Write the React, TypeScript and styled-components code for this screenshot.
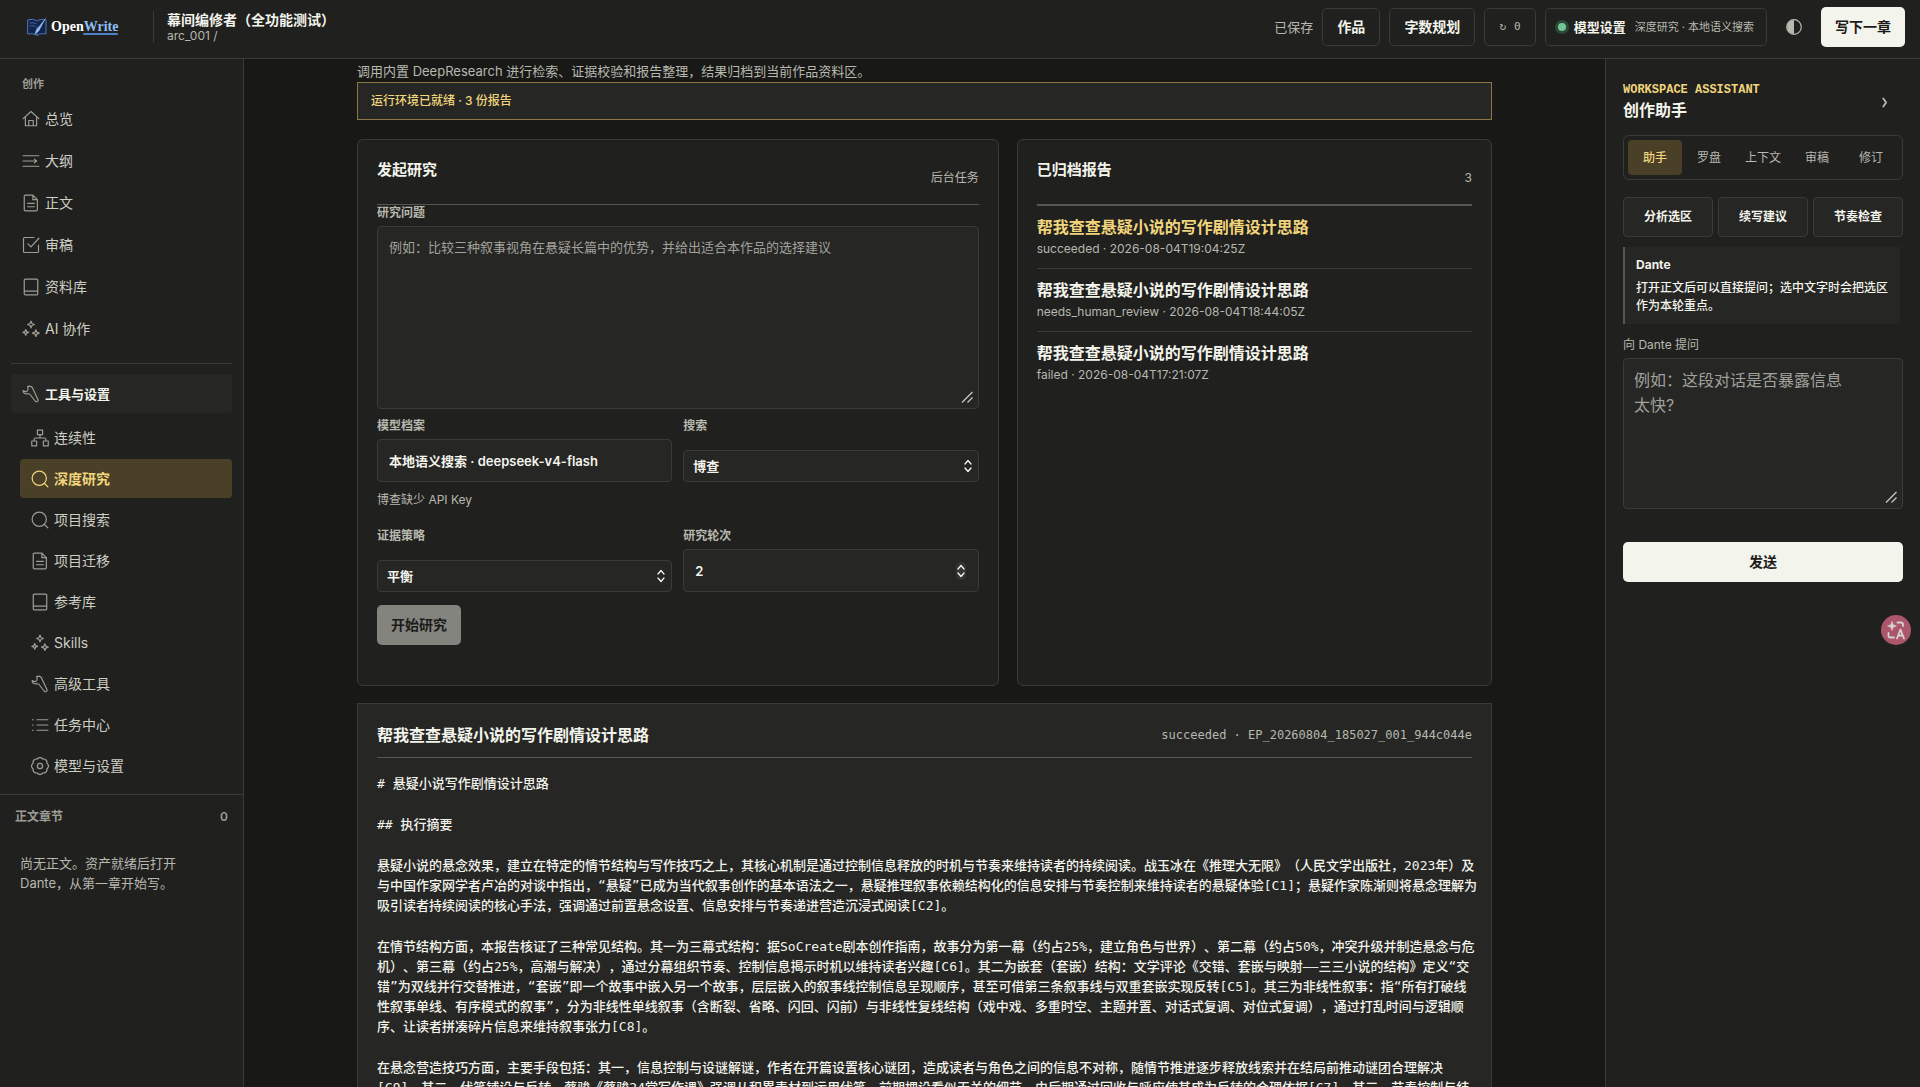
import React from "react";
import styled, { createGlobalStyle, css } from "styled-components";

const c = {
  bg: "#181816",
  panel: "#20201e",
  field: "#262624",
  line: "#3a3a37",
  rule: "#56564f",
  text: "#f3f4ec",
  muted: "#b7b8ae",
  dim: "#9c9d94",
  gold: "#f0d57c",
  goldLine: "#8b7644",
  goldBg: "#4a4028",
  ink: "#1b1b19",
};
const sans = `Inter, "Noto Sans CJK SC", sans-serif`;
const mono = `"DejaVu Sans Mono", "Noto Sans CJK SC", monospace`;

const Global = createGlobalStyle`
  *, *::before, *::after { box-sizing: border-box; }
  body { margin: 0; background: ${c.bg}; color: ${c.text}; font: 400 13px/20px ${sans}; }
  h1, h2, h3, p, ul { margin: 0; padding: 0; }
  ul { list-style: none; }
  a { color: inherit; text-decoration: none; }
  button, input, select, textarea { font: inherit; color: inherit; margin: 0; }
  button { cursor: pointer; }
`;

/* ---------- icons ---------- */

const Glyph = styled.svg<{ $size?: number }>`
  flex: none;
  width: ${(p) => p.$size ?? 18}px;
  height: ${(p) => p.$size ?? 18}px;
  fill: none;
  stroke: currentColor;
  stroke-width: 1.6;
  stroke-linecap: round;
  stroke-linejoin: round;
`;

type IconName =
  | "home" | "outline" | "doc" | "check" | "book" | "sparkles"
  | "wrench" | "network" | "search" | "list" | "gear";

const star = (x: number, y: number, r: number) => {
  const k = r * 0.28;
  return `M${x} ${y - r}L${x + k} ${y - k}L${x + r} ${y}L${x + k} ${y + k}L${x} ${y + r}L${x - k} ${y + k}L${x - r} ${y}L${x - k} ${y - k}Z`;
};

/* Closed ring of outward bumps around the centre of a 24-unit box. */
const scallop = (lobes: number, r: number, bump: number) => {
  const point = (i: number) => {
    const a = (Math.PI * 2 * (i + 0.5)) / lobes;
    return `${(12 + r * Math.sin(a)).toFixed(2)} ${(12 - r * Math.cos(a)).toFixed(2)}`;
  };
  const arcs = Array.from({ length: lobes }, (_, i) => `A${bump} ${bump} 0 0 1 ${point(i + 1)}`);
  return `M${point(0)}${arcs.join("")}Z`;
};

const shapes: Record<IconName, React.ReactNode> = {
  home: <path d="M1.500 11.500 12 2l10.500 9.500M4.500 9.500V21h15V9.500M9 21v-7h6v7" />,
  outline: <path d="M1.500 5h21M1.500 12H19M1.500 19h21M16.500 9.500 19.500 12l-3 2.500" />,
  doc: <path d="M4.500 1.500h10l6 6V21a1.500 1.500 0 0 1-1.500 1.500H4.500A1.500 1.500 0 0 1 3 21V3a1.500 1.500 0 0 1 1.500-1.500ZM14.500 1.500v6h6M7.500 12.500h9M7.500 17h9" />,
  check: <path d="M16 2H3.500A1.500 1.500 0 0 0 2 3.500v17A1.500 1.500 0 0 0 3.500 22h17a1.500 1.500 0 0 0 1.500-1.500V12M8 10.500l4 4L22.500 3" />,
  book: <path d="M4.500 1.500h15A1.500 1.500 0 0 1 21 3v18a1.500 1.500 0 0 1-1.500 1.500h-15A1.500 1.500 0 0 1 3 21V3a1.500 1.500 0 0 1 1.500-1.500ZM3 17.500h18" />,
  sparkles: <path d={star(12, 6, 4.5) + star(5, 16.5, 3.8) + star(18.5, 17.5, 4.5)} />,
  wrench: <path d="M9.500 1.500c2.500 0 4.300 1.300 5 3.500l7 15c.5 1.300-2.500 3-3.500 2L11 13c-1-1.500-2-1.500-3.500-1.200C4 12.200 1.500 10.500 1.500 7.500l2.500 1C5.500 9 7.500 8 8 6.500 8.300 5 8 3.500 7.500 2Z" />,
  network: <path d="M8.500 1.500h7v6h-7ZM1 16h6.500v6.500H1ZM16.500 16H23v6.500h-6.500ZM12 7.500V12M4.200 16v-2.500A1.500 1.500 0 0 1 5.700 12h12.600a1.500 1.500 0 0 1 1.500 1.500V16" />,
  search: <><circle cx="11" cy="11" r="9.500" /><path d="m18 18 4.500 4.500" /></>,
  list: <path d="M8 5h14.500M8 12h14.500M8 19h14.500M2 5h1M2 12h1M2 19h1" />,
  gear: <><path d={scallop(8, 10, 4.6)} /><circle cx="12" cy="12" r="3.500" /></>,
};

const Icon = ({ name }: { name: IconName }) => (
  <Glyph viewBox="0 0 24 24" aria-hidden="true">{shapes[name]}</Glyph>
);

/* ---------- shell ---------- */

const Shell = styled.div`
  display: grid;
  grid-template: auto minmax(0, 1fr) / 244px minmax(0, 1fr) 315px;
  grid-template-areas: "top top top" "nav main aside";
  height: 100vh;
  overflow: hidden;
`;

const TopBar = styled.header`
  grid-area: top;
  display: flex;
  align-items: center;
  justify-content: space-between;
  height: 59px;
  padding: 0 15px 4px 27px;
  background: ${c.panel};
  border-bottom: 1px solid ${c.line};
`;
const Row = styled.div<{ $gap?: number }>`
  display: flex;
  align-items: center;
  gap: ${(p) => p.$gap ?? 0}px;
`;
const Brand = styled.a`
  display: flex;
  align-items: center;
  gap: 4px;
  width: 126px;
  font: 700 14px/18px "Liberation Serif", serif;
  color: #fff;
`;
const BrandBlue = styled.span`
  position: relative;
  color: #8fbcf5;
  &::after {
    content: "";
    position: absolute;
    left: -1px;
    right: 0;
    bottom: -1px;
    height: 2px;
    border-radius: 2px;
    background: #4f7fc8;
  }
`;
const Project = styled.div`
  padding: 0 13px;
  border-left: 1px solid ${c.line};
  font-size: 12px;
  line-height: 14px;
  color: ${c.muted};
`;
const ProjectName = styled.h1`
  font-size: 14px;
  line-height: 18px;
  font-weight: 700;
  color: ${c.text};
`;
const Saved = styled.span`
  color: ${c.muted};
`;
const buttonBase = css`
  display: inline-flex;
  align-items: center;
  justify-content: center;
  border-radius: 5px;
  white-space: nowrap;
`;
const BarButton = styled.button<{ $mono?: boolean }>`
  ${buttonBase}
  gap: 8px;
  height: 38px;
  padding: 0 14px;
  background: transparent;
  border: 1px solid ${c.line};
  font-size: 14px;
  font-weight: 700;
  ${(p) => p.$mono && css`
    font: 400 11px/16px ${mono};
    color: ${c.muted};
  `}
`;
const ModelButton = styled(BarButton)`
  padding: 0 12px 0 10px;
  gap: 6px;
  font-size: 13px;
  small { margin-left: 3px; font-size: 11px; font-weight: 400; color: ${c.muted}; }
`;
const Dot = styled.span`
  width: 8px;
  height: 8px;
  margin: 0 2px;
  border-radius: 50%;
  background: #73c795;
  box-shadow: 0 0 0 3px #2b4a38;
`;
const IconButton = styled.button`
  ${buttonBase}
  width: 36px;
  height: 36px;
  padding: 0;
  border: 0;
  background: transparent;
  color: ${c.muted};
`;
const Primary = styled.button<{ $wide?: boolean }>`
  ${buttonBase}
  height: 40px;
  width: ${(p) => (p.$wide ? "100%" : "auto")};
  padding: 0 14px;
  border: 0;
  background: ${c.text};
  color: ${c.ink};
  font-size: 14px;
  font-weight: 700;
  &:disabled { background: #83847e; color: ${c.ink}; cursor: default; font-weight: 600; }
`;

/* ---------- left navigation ---------- */

const Sidebar = styled.nav`
  grid-area: nav;
  display: flex;
  flex-direction: column;
  background: ${c.panel};
  border-right: 1px solid ${c.line};
  overflow: hidden;
`;
const NavBlock = styled.div`
  padding: 17px 11px 9px;
`;
const NavLabel = styled.h2`
  padding-left: 11px;
  margin-bottom: 7px;
  font-size: 11px;
  line-height: 16px;
  font-weight: 600;
  color: ${c.dim};
`;
const NavList = styled.ul<{ $sub?: boolean }>`
  display: flex;
  flex-direction: column;
  gap: ${(p) => (p.$sub ? 2 : 3)}px;
  ${(p) => p.$sub && css`padding: 5px 0 0 9px;`}
`;
const NavItem = styled.a<{ $tone?: "active" | "group" }>`
  display: flex;
  align-items: center;
  gap: 5px;
  height: 39px;
  padding: 0 11px;
  border-radius: 4px;
  font-size: 14px;
  font-weight: 400;
  color: #cdcec4;
  svg { color: ${c.dim}; }
  ${(p) => p.$tone === "active" && css`
    background: ${c.goldBg};
    color: ${c.gold};
    font-weight: 700;
    svg { color: ${c.gold}; }
  `}
  ${(p) => p.$tone === "group" && css`
    background: ${c.field};
    color: ${c.text};
    font-size: 13px;
    font-weight: 600;
  `}
`;
const NavRule = styled.hr`
  height: 1px;
  margin: 15px 0 10px;
  border: 0;
  background: ${c.line};
`;
const Chapters = styled.section`
  border-top: 1px solid ${c.line};
  padding: 13px 15px;
`;
const ChaptersHead = styled.div`
  display: flex;
  justify-content: space-between;
  font-size: 12px;
  line-height: 18px;
  font-weight: 600;
  color: ${c.dim};
  h2 { font: inherit; }
`;
const Empty = styled.p`
  margin-top: 27px;
  padding: 0 5px;
  font-size: 13px;
  line-height: 20px;
  color: ${c.muted};
`;

/* ---------- main column ---------- */

const Main = styled.main`
  grid-area: main;
  padding: 2px 32px 40px;
  overflow-y: auto;
  scrollbar-width: none;
`;
const Column = styled.div`
  max-width: 1135px;
  margin: 0 auto;
`;
const Intro = styled.p`
  margin-bottom: 1px;
  color: ${c.muted};
`;
const Banner = styled.p`
  padding: 9px 13px;
  border: 1px solid ${c.goldLine};
  background: ${c.field};
  color: ${c.gold};
  font-size: 12px;
  line-height: 18px;
  font-weight: 500;
`;
const Cards = styled.div`
  display: grid;
  grid-template-columns: minmax(0, 135fr) minmax(0, 100fr);
  gap: 18px;
  margin: 19px 0 17px;
`;
const Card = styled.section`
  padding: 19px 19px 40px;
  border: 1px solid ${c.line};
  border-radius: 6px;
  background: ${c.panel};
`;
const CardHead = styled.header`
  display: flex;
  align-items: flex-end;
  justify-content: space-between;
  padding-bottom: 17px;
  border-bottom: 1px solid ${c.rule};
  font-size: 12px;
  line-height: 18px;
  color: ${c.muted};
  h2 { margin-bottom: 6px; font-size: 15px; line-height: 22px; font-weight: 700; color: ${c.text}; }
`;
const FieldGrid = styled.div`
  display: grid;
  grid-template-columns: repeat(2, minmax(0, 1fr));
  column-gap: 11px;
`;
const Field = styled.div`
  display: flex;
  flex-direction: column;
  justify-content: space-between;
  gap: 5px;
`;
const Label = styled.label<{ $light?: boolean }>`
  font-size: 12px;
  line-height: 16px;
  font-weight: ${(p) => (p.$light ? 400 : 600)};
  color: ${c.muted};
`;
const Stack = styled.div`
  position: relative;
  display: flex;
`;
const control = css`
  width: 100%;
  border: 1px solid ${c.line};
  border-radius: 4px;
  background: ${c.field};
  color: ${c.text};
  outline: none;
`;
const TextArea = styled.textarea<{ $h: number; $large?: boolean }>`
  ${control}
  display: block;
  height: ${(p) => p.$h}px;
  padding: ${(p) => (p.$large ? "9px 10px" : "10px 11px")};
  font-size: ${(p) => (p.$large ? 16 : 13)}px;
  line-height: ${(p) => (p.$large ? 25 : 20)}px;
  resize: none;
  &::placeholder { color: #a1a29b; opacity: 1; }
`;
const TextInput = styled.input`
  ${control}
  height: 43px;
  padding: 0 11px;
  font-size: 13px;
  font-weight: 600;
  appearance: textfield;
  &::-webkit-inner-spin-button { display: none; }
`;
const Select = styled.select`
  ${control}
  height: 32px;
  padding: 0 9px;
  font-size: 13px;
  font-weight: 600;
  appearance: none;
`;
const Corner = styled.svg`
  position: absolute;
  right: 6px;
  bottom: 6px;
  width: 12px;
  height: 12px;
  stroke: #c4c4be;
  stroke-width: 1.4;
  pointer-events: none;
`;
const Arrows = styled.svg<{ $spin?: boolean }>`
  position: absolute;
  top: 0;
  bottom: 0;
  right: ${(p) => (p.$spin ? 13 : 6)}px;
  width: 10px;
  height: 18px;
  margin: auto 0;
  border-radius: 5px;
  background: ${(p) => (p.$spin ? "#353533" : "transparent")};
  fill: none;
  stroke: ${c.text};
  stroke-width: 1.3;
  stroke-linecap: round;
  stroke-linejoin: round;
  pointer-events: none;
`;
const Hint = styled.p`
  margin: 9px 0 20px;
  font-size: 12px;
  line-height: 17px;
  color: ${c.muted};
`;
const Gap = styled.div<{ $top: number }>`
  margin-top: ${(p) => p.$top}px;
`;

const ReportItem = styled.li<{ $current?: boolean }>`
  padding: 10px 0;
  border-top: 1px solid ${(p) => (p.$current ? c.rule : c.line)};
  font-size: 12px;
  line-height: 18px;
  color: ${c.muted};
  h3 {
    margin-bottom: 2px;
    font-size: 16px;
    line-height: 22px;
    font-weight: 700;
    color: ${(p) => (p.$current ? c.gold : c.text)};
  }
`;

const Article = styled.article`
  padding: 19px;
  border: 1px solid ${c.line};
  background: ${c.field};
`;
const ArticleHead = styled.header`
  display: flex;
  align-items: center;
  justify-content: space-between;
  padding-bottom: 10px;
  border-bottom: 1px solid ${c.rule};
  h2 { font-size: 16px; line-height: 24px; font-weight: 700; }
  span { font: 400 12px/18px ${mono}; color: ${c.muted}; }
`;
const Prose = styled.div`
  display: flex;
  flex-direction: column;
  gap: 21px;
  padding-top: 16px;
  font: 500 13px/20px ${mono};
  color: ${c.text};
  text-spacing-trim: space-all;
  p { white-space: pre; }
`;

/* ---------- assistant ---------- */

const Aside = styled.aside`
  grid-area: aside;
  display: flex;
  flex-direction: column;
  padding: 23px 17px;
  background: ${c.panel};
  border-left: 1px solid ${c.line};
`;
const AsideHead = styled.header`
  display: flex;
  align-items: center;
  justify-content: space-between;
  margin-bottom: 14px;
  h2 { margin-top: 1px; font-size: 16px; line-height: 22px; font-weight: 700; }
`;
const Eyebrow = styled.p`
  font: 700 12px/16px "Liberation Mono", monospace;
  color: ${c.gold};
`;
const Tabs = styled.div`
  display: grid;
  grid-template-columns: repeat(5, minmax(0, 1fr));
  padding: 4px;
  border: 1px solid ${c.line};
  border-radius: 6px;
`;
const Tab = styled.button<{ $on?: boolean }>`
  height: 35px;
  padding: 0;
  border: 0;
  border-radius: 4px;
  font-size: 12px;
  font-weight: ${(p) => (p.$on ? 500 : 400)};
  background: ${(p) => (p.$on ? c.goldBg : "transparent")};
  color: ${(p) => (p.$on ? c.gold : c.muted)};
`;
const Quick = styled.div`
  display: grid;
  grid-template-columns: repeat(3, minmax(0, 1fr));
  gap: 5px;
  margin: 17px 0 10px;
`;
const QuickButton = styled.button`
  height: 40px;
  padding: 0;
  border: 1px solid ${c.line};
  border-radius: 4px;
  background: ${c.field};
  font-size: 12px;
  font-weight: 600;
`;
const Message = styled.div`
  margin: 0 3px 13px 0;
  padding: 9px 11px 9px;
  border-left: 2px solid ${c.rule};
  background: ${c.field};
  font-size: 12px;
  line-height: 18px;
  font-weight: 500;
  strong { display: block; margin-bottom: 5px; font-weight: 700; }
`;
const Translate = styled.button`
  position: fixed;
  right: 9px;
  top: 615px;
  width: 30px;
  height: 30px;
  padding: 0;
  display: grid;
  place-items: center;
  border: 0;
  border-radius: 50%;
  background: #ac566c;
  color: #d6d2d0;
`;

/* ---------- content ---------- */

const primaryNav: [IconName, string][] = [
  ["home", "总览"], ["outline", "大纲"], ["doc", "正文"],
  ["check", "审稿"], ["book", "资料库"], ["sparkles", "AI 协作"],
];
const toolNav: [IconName, string][] = [
  ["network", "连续性"], ["search", "深度研究"], ["search", "项目搜索"],
  ["doc", "项目迁移"], ["book", "参考库"], ["sparkles", "Skills"],
  ["wrench", "高级工具"], ["list", "任务中心"], ["gear", "模型与设置"],
];
const reportTitle = "帮我查查悬疑小说的写作剧情设计思路";
const reports = [
  "succeeded · 2026-08-04T19:04:25Z",
  "needs_human_review · 2026-08-04T18:44:05Z",
  "failed · 2026-08-04T17:21:07Z",
];
const prose = [
  "# 悬疑小说写作剧情设计思路",
  "## 执行摘要",
  "悬疑小说的悬念效果，建立在特定的情节结构与写作技巧之上，其核心机制是通过控制信息释放的时机与节奏来维持读者的持续阅读。战玉冰在《推理大无限》（人民文学出版社，2023年）及\n与中国作家网学者卢冶的对谈中指出，“悬疑”已成为当代叙事创作的基本语法之一，悬疑推理叙事依赖结构化的信息安排与节奏控制来维持读者的悬疑体验[C1]；悬疑作家陈渐则将悬念理解为\n吸引读者持续阅读的核心手法，强调通过前置悬念设置、信息安排与节奏递进营造沉浸式阅读[C2]。",
  "在情节结构方面，本报告核证了三种常见结构。其一为三幕式结构：据SoCreate剧本创作指南，故事分为第一幕（约占25%，建立角色与世界）、第二幕（约占50%，冲突升级并制造悬念与危\n机）、第三幕（约占25%，高潮与解决），通过分幕组织节奏、控制信息揭示时机以维持读者兴趣[C6]。其二为嵌套（套嵌）结构：文学评论《交错、套嵌与映射——三三小说的结构》定义“交\n错”为双线并行交替推进，“套嵌”即一个故事中嵌入另一个故事，层层嵌入的叙事线控制信息呈现顺序，甚至可借第三条叙事线与双重套嵌实现反转[C5]。其三为非线性叙事：指“所有打破线\n性叙事单线、有序模式的叙事”，分为非线性单线叙事（含断裂、省略、闪回、闪前）与非线性复线结构（戏中戏、多重时空、主题并置、对话式复调、对位式复调），通过打乱时间与逻辑顺\n序、让读者拼凑碎片信息来维持叙事张力[C8]。",
  "在悬念营造技巧方面，主要手段包括：其一，信息控制与设谜解谜，作者在开篇设置核心谜团，造成读者与角色之间的信息不对称，随情节推进逐步释放线索并在结局前推动谜团合理解决\n[C9]。其二，伏笔铺设与反转，蔡骏《蔡骏24堂写作课》强调从积累素材到运用伏笔，前期埋设看似无关的细节，由后期通过回收与呼应使其成为反转的合理依据[C7]。其三，节奏控制与结",
];

const ResizeCorner = () => (
  <Corner viewBox="0 0 12 12" aria-hidden="true"><path d="M1 11.500 11.500 1M6.500 11.500l5-5" /></Corner>
);
const UpDown = ({ spin }: { spin?: boolean }) => (
  <Arrows $spin={spin} viewBox="0 0 10 18" aria-hidden="true"><path d="m2 7 3-3.500L8 7M2 11l3 3.500L8 11" /></Arrows>
);

export default function App() {
  return (
    <>
      <Global />
      <Shell>
        <TopBar>
          <Row>
            <Brand href="#" aria-label="OpenWrite">
              <svg width="20" height="20" viewBox="0 0 20 20" fill="none" strokeLinejoin="round" strokeLinecap="round" aria-hidden="true">
                <path d="M1 3c3-1 6-1 9 1 2-1.500 5-2 9-1v14c-3-.6-6-.5-9 1.500C7 16.500 4 16.400 1 17Z" fill="#132548" stroke="#4a76b8" />
                <path d="M3 6c2.500-.5 4-.3 6 .7M3 9c2.500-.5 4-.3 5 .3M10 18V10" stroke="#4a76b8" strokeWidth=".8" />
                <path d="M19.500 0 9 13l-1.500 5L12 14Z" fill="#8fbcf5" />
              </svg>
              <span>Open<BrandBlue>Write</BrandBlue></span>
            </Brand>
            <Project>
              <ProjectName>幕间编修者（全功能测试）</ProjectName>
              arc_001 /
            </Project>
          </Row>
          <Row $gap={9}>
            <Saved>已保存</Saved>
            <BarButton type="button">作品</BarButton>
            <BarButton type="button">字数规划</BarButton>
            <BarButton type="button" $mono><span>↻</span><span>0</span></BarButton>
            <ModelButton type="button"><Dot />模型设置<small>深度研究 · 本地语义搜索</small></ModelButton>
            <IconButton type="button" aria-label="切换主题">
              <svg width="16" height="16" viewBox="0 0 16 16" aria-hidden="true">
                <circle cx="8" cy="8" r="7.300" fill="none" stroke="currentColor" strokeWidth="1.200" />
                <path d="M8 1a7 7 0 0 0 0 14Z" fill="currentColor" />
              </svg>
            </IconButton>
            <Primary type="button">写下一章</Primary>
          </Row>
        </TopBar>

        <Sidebar>
          <NavBlock>
            <NavLabel>创作</NavLabel>
            <NavList>
              {primaryNav.map(([icon, text]) => (
                <li key={text}><NavItem href="#"><Icon name={icon} />{text}</NavItem></li>
              ))}
            </NavList>
            <NavRule />
            <NavItem href="#" $tone="group"><Icon name="wrench" />工具与设置</NavItem>
            <NavList $sub>
              {toolNav.map(([icon, text]) => (
                <li key={text}>
                  <NavItem href="#" $tone={text === "深度研究" ? "active" : undefined}><Icon name={icon} />{text}</NavItem>
                </li>
              ))}
            </NavList>
          </NavBlock>
          <Chapters>
            <ChaptersHead><h2>正文章节</h2><span>0</span></ChaptersHead>
            <Empty>尚无正文。资产就绪后打开<br />Dante，从第一章开始写。</Empty>
          </Chapters>
        </Sidebar>

        <Main>
          <Column>
            <Intro>调用内置 DeepResearch 进行检索、证据校验和报告整理，结果归档到当前作品资料区。</Intro>
            <Banner>运行环境已就绪 · 3 份报告</Banner>
            <Cards>
              <Card>
                <CardHead><h2>发起研究</h2><span>后台任务</span></CardHead>
                <Field>
                  <Label htmlFor="question">研究问题</Label>
                  <Stack>
                    <TextArea id="question" $h={183} placeholder="例如：比较三种叙事视角在悬疑长篇中的优势，并给出适合本作品的选择建议" />
                    <ResizeCorner />
                  </Stack>
                </Field>
                <Gap $top={9}>
                  <FieldGrid>
                    <Field>
                      <Label htmlFor="model">模型档案</Label>
                      <TextInput id="model" readOnly value="本地语义搜索 · deepseek-v4-flash" />
                    </Field>
                    <Field>
                      <Label htmlFor="engine">搜索</Label>
                      <Stack><Select id="engine"><option>博查</option></Select><UpDown /></Stack>
                    </Field>
                  </FieldGrid>
                </Gap>
                <Hint>博查缺少 API Key</Hint>
                <FieldGrid>
                  <Field>
                    <Label htmlFor="policy">证据策略</Label>
                    <Stack><Select id="policy"><option>平衡</option></Select><UpDown /></Stack>
                  </Field>
                  <Field>
                    <Label htmlFor="rounds">研究轮次</Label>
                    <Stack><TextInput id="rounds" type="number" defaultValue={2} /><UpDown spin /></Stack>
                  </Field>
                </FieldGrid>
                <Gap $top={13}><Primary type="button" disabled>开始研究</Primary></Gap>
              </Card>
              <Card>
                <CardHead><h2>已归档报告</h2><span>3</span></CardHead>
                <ul>
                  {reports.map((meta, i) => (
                    <ReportItem key={meta} $current={i === 0}><h3>{reportTitle}</h3><p>{meta}</p></ReportItem>
                  ))}
                </ul>
              </Card>
            </Cards>
            <Article>
              <ArticleHead>
                <h2>{reportTitle}</h2>
                <span>succeeded · EP_20260804_185027_001_944c044e</span>
              </ArticleHead>
              <Prose>{prose.map((p) => <p key={p.slice(0, 8)}>{p}</p>)}</Prose>
            </Article>
          </Column>
        </Main>

        <Aside>
          <AsideHead>
            <div>
              <Eyebrow>WORKSPACE ASSISTANT</Eyebrow>
              <h2>创作助手</h2>
            </div>
            <IconButton type="button" aria-label="收起助手">
              <Glyph $size={16} viewBox="0 0 14 14" aria-hidden="true"><path d="M5.500 4 8 7.500 5.500 11" /></Glyph>
            </IconButton>
          </AsideHead>
          <Tabs role="tablist">
            {["助手", "罗盘", "上下文", "审稿", "修订"].map((t, i) => (
              <Tab key={t} type="button" role="tab" aria-selected={i === 0} $on={i === 0}>{t}</Tab>
            ))}
          </Tabs>
          <Quick>
            {["分析选区", "续写建议", "节奏检查"].map((t) => <QuickButton key={t} type="button">{t}</QuickButton>)}
          </Quick>
          <Message>
            <strong>Dante</strong>
            打开正文后可以直接提问；选中文字时会把选区作为本轮重点。
          </Message>
          <Field>
            <Label htmlFor="ask" $light>向 Dante 提问</Label>
            <Stack>
              <TextArea id="ask" $h={151} $large placeholder={"例如：这段对话是否暴露信息\n太快?"} />
              <ResizeCorner />
            </Stack>
          </Field>
          <Gap $top={33}><Primary type="button" $wide>发送</Primary></Gap>
        </Aside>
      </Shell>
      <Translate type="button" aria-label="翻译">
        <svg width="20" height="20" viewBox="0 0 20 20" fill="none" stroke="currentColor" strokeWidth="1.800" strokeLinecap="round" strokeLinejoin="round" aria-hidden="true">
          <path d="M6 1.500 7.200 4.800 10.500 6 7.200 7.200 6 10.500 4.800 7.200 1.500 6l3.300-1.200Z" fill="currentColor" strokeWidth=".5" />
          <path d="M11.500 2.500H15a2 2 0 0 1 2 2V6M2.500 13v2.500a2 2 0 0 0 2 2H8M11 18.500l3.500-9 3.500 9M12.200 15.500h4.600" />
        </svg>
      </Translate>
    </>
  );
}
